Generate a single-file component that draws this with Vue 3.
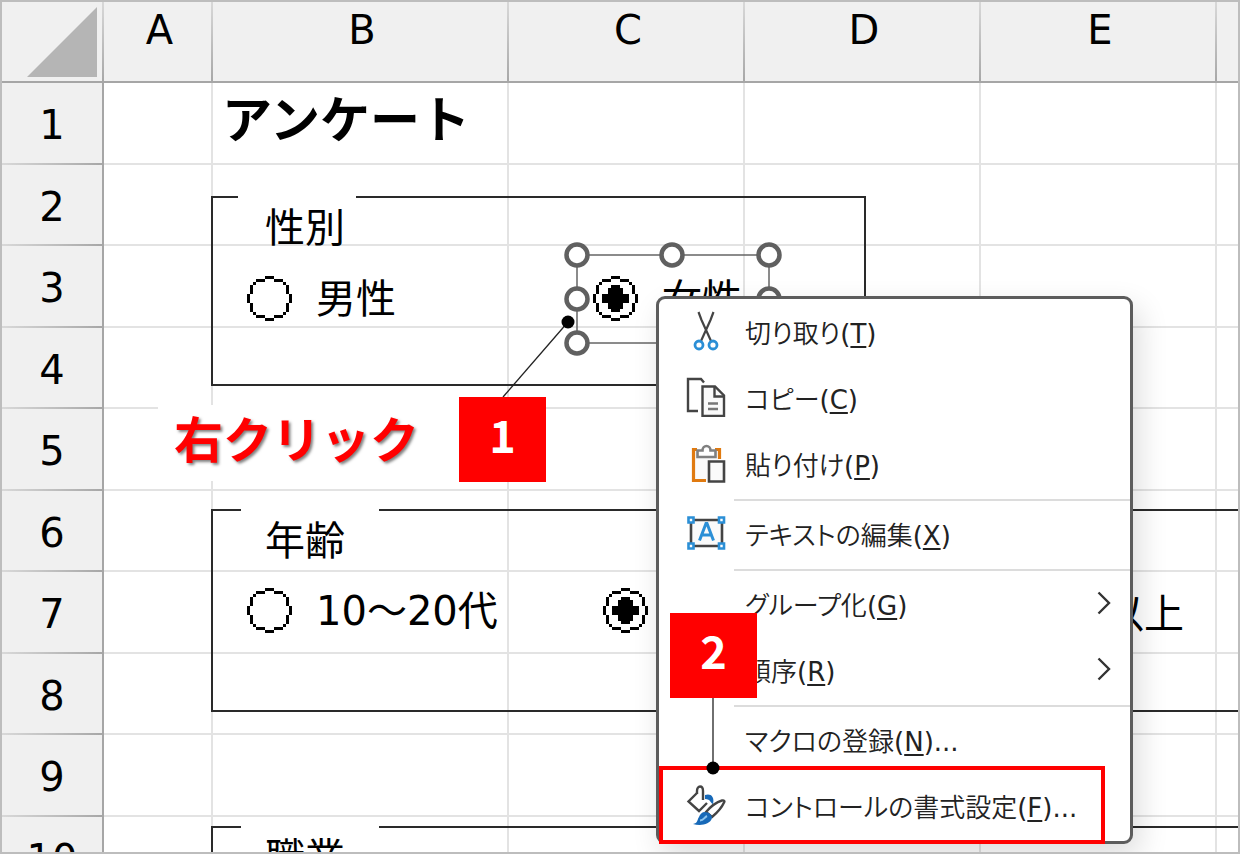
<script setup>
import { ref } from 'vue'

const columns = ['A', 'B', 'C', 'D', 'E', '']
const rows = [1, 2, 3, 4, 5, 6, 7, 8, 9, 10]

const gender = ref('female')
const age = ref('middle')

const menu = [
  { label: '切り取り', accel: 'T', icon: 'cut' },
  { label: 'コピー', accel: 'C', icon: 'copy' },
  { label: '貼り付け', accel: 'P', icon: 'paste' },
  { divider: true },
  { label: 'テキストの編集', accel: 'X', icon: 'text' },
  { divider: true },
  { label: 'グループ化', accel: 'G', submenu: true },
  { label: '順序', accel: 'R', submenu: true },
  { divider: true },
  { label: 'マクロの登録', accel: 'N', more: true },
  { label: 'コントロールの書式設定', accel: 'F', icon: 'format', more: true },
]

// 15x15 pixel ring and dot of the option button
const ring =
  'M6 0h3v1H6zM3 1h3v1H3zM9 1h3v1H9zM2 2h1v1H2zM12 2h1v1h-1zM1 3h1v3H1zM13 3h1v3h-1zM0 6h1v3H0zM14 6h1v3h-1z' +
  'M1 9h1v3H1zM13 9h1v3h-1zM2 12h1v1H2zM12 12h1v1h-1zM3 13h3v1H3zM9 13h3v1H9zM6 14h3v1H6z'
const dot = 'M6 3h3v1h1v2h2v3h-2v2H9v1H6v-1H5V9H3V6h2V4h1z'

const options = [
  { id: 'male', group: 'gender', value: 'male', text: '男性' },
  { id: 'female', group: 'gender', value: 'female', text: '女性' },
  { id: 'young', group: 'age', value: 'young', text: '10～20代' },
  { id: 'middle', group: 'age', value: 'middle', text: '' },
]

const models = { gender, age }
const handles = [[13, 13], [108, 13], [205, 13], [13, 57], [205, 57], [13, 101], [108, 101], [205, 101]]
</script>

<template>
  <main class="sheet">
    <table class="grid">
      <colgroup>
        <col class="col-head" />
        <col class="col-a" />
        <col class="col-b" />
        <col class="col-c" />
        <col class="col-d" />
        <col class="col-e" />
        <col />
      </colgroup>
      <thead>
        <tr>
          <th class="corner">
            <svg class="corner-mark" viewBox="0 0 70 70" aria-hidden="true">
              <path d="M70 0v70H0z" fill="#b5b5b5" />
            </svg>
          </th>
          <th v-for="c in columns" :key="c" scope="col">{{ c }}</th>
        </tr>
      </thead>
      <tbody>
        <tr v-for="r in rows" :key="r">
          <th scope="row">{{ r }}</th>
          <td v-for="c in columns" :key="c">
            <span v-if="r === 1 && c === 'B'" class="title">アンケート</span>
          </td>
        </tr>
      </tbody>
    </table>

    <!-- Form controls drawn on top of the cells -->
    <fieldset class="group group-gender">
      <legend><span>性別</span></legend>
    </fieldset>
    <fieldset class="group group-age">
      <legend><span>年齢</span></legend>
    </fieldset>
    <fieldset class="group group-job">
      <legend><span>職業</span></legend>
    </fieldset>

    <label v-for="o in options" :key="o.id" class="option" :class="`option-${o.id}`">
      <input
        v-model="models[o.group].value"
        type="radio"
        :name="o.group"
        :value="o.value"
      />
      <svg viewBox="0 0 15 15" shape-rendering="crispEdges" aria-hidden="true">
        <path :d="ring" />
        <path v-if="models[o.group].value === o.value" :d="dot" />
      </svg>
      <span>{{ o.text }}</span>
    </label>
    <span class="option-tail">以上</span>

    <svg class="selection" viewBox="0 0 218 114" aria-hidden="true">
      <rect x="13" y="13" width="192" height="88" fill="none" stroke="#666" stroke-width="1.5" />
      <circle
        v-for="([x, y], i) in handles"
        :key="i"
        :cx="x"
        :cy="y"
        r="10.5"
        fill="#fff"
        stroke="#606060"
        stroke-width="4.5"
      />
    </svg>

    <div class="context-menu" role="menu">
      <template v-for="(item, i) in menu" :key="i">
        <hr v-if="item.divider" />
        <button v-else type="button" role="menuitem" class="item">
          <span class="icon">
            <svg v-if="item.icon === 'cut'" viewBox="0 0 40 40">
              <path d="M12.500 1l3 8 9.500 21M27.500 1l-3 8-9.500 21" fill="none" stroke="#444" stroke-width="2.200" />
              <circle cx="13" cy="34" r="4" fill="#fff" stroke="#2b8fd6" stroke-width="2.800" />
              <circle cx="27" cy="34" r="4" fill="#fff" stroke="#2b8fd6" stroke-width="2.800" />
            </svg>
            <svg v-else-if="item.icon === 'copy'" viewBox="0 0 40 40" fill="none" stroke="#444" stroke-width="2.400">
              <path d="M12 34H2V2h13l3 3.500" />
              <path d="M16.500 9.500H29l9 9V39H16.500z" fill="#fafafa" />
              <path d="M28.500 10v9.500H38" />
              <path d="M22 26.500h10M22 32h10" stroke="#777" />
            </svg>
            <svg v-else-if="item.icon === 'paste'" viewBox="0 0 40 40" fill="none">
              <path d="M7 6h26v14H22v18H7z" fill="#fafafa" />
              <path d="M11 6.500H7.500v31H20M29 6.500h4.500V16" stroke="#e07a10" stroke-width="3.200" />
              <path d="M11.500 14V7.500h5c0-6 8-6 8 0h5V14z" fill="#fff" stroke="#808080" stroke-width="2.600" />
              <path d="M23 18.500h15v20H23z" fill="#fafafa" stroke="#444" stroke-width="2.600" />
            </svg>
            <svg v-else-if="item.icon === 'text'" viewBox="0 0 40 40" fill="none">
              <path d="M5 7h31v26H5z" fill="#fafafa" stroke="#444" stroke-width="2.600" />
              <path d="M13.500 27.500l6.500-17h1l6.500 17M16 22h9" stroke="#2b8fd6" stroke-width="3" />
              <path
                d="M2.500 4.500h5v5h-5zM33 4.500h5v5h-5zM2.500 30.500h5v5h-5zM33 30.500h5v5h-5z"
                fill="#fff"
                stroke="#2b8fd6"
                stroke-width="2.600"
              />
            </svg>
            <svg v-else-if="item.icon === 'format'" viewBox="0 0 40 40" fill="none">
              <path d="M11 8L2.500 16.500 13 26l8-8" stroke="#444" stroke-width="2.400" />
              <path d="M11 9V6c0-6 6-6 6 0v9" stroke="#444" stroke-width="2.400" />
              <path d="M19 10c5-2 10 1 8 9-3-1-2-5-8-5z" fill="#1769b8" />
              <path d="M20 27C26 20 31 17 36 15.500c2-.500 3 .500 2 2C36 22 32 27 26 32z" fill="#fff" stroke="#444" stroke-width="2.400" />
              <path d="M19 27c4 0 7 3 7 6-2 7-12 8-19 6 5-1 4-4 6-7 1-3 3-5 6-5z" fill="#1769b8" />
              <path d="M14 35.500c4 0 4-3 7-4.500" stroke="#8cc4ee" stroke-width="2" />
            </svg>
          </span>
          <span class="label">{{ item.label }}</span>
          <span class="accel">(<u>{{ item.accel }}</u>)<template v-if="item.more">...</template></span>
          <svg v-if="item.submenu" class="chevron" viewBox="0 0 14 24" aria-hidden="true">
            <path d="M1.500 1.500L12 12 1.500 22.500" fill="none" stroke="#333" stroke-width="2.400" />
          </svg>
        </button>
      </template>
    </div>

    <!-- Step annotations -->
    <strong class="note">右クリック</strong>
    <div class="frame"></div>
    <svg class="leader leader-1" viewBox="0 0 76 86" aria-hidden="true">
      <path d="M3 83L68 8" stroke="#222" stroke-width="1.300" />
      <circle cx="68" cy="8" r="6.500" />
    </svg>
    <b class="step step-1">1</b>
    <svg class="leader leader-2" viewBox="0 0 14 80" aria-hidden="true">
      <path d="M7 0v72" stroke="#222" stroke-width="1.300" />
      <circle cx="7" cy="72" r="6.500" />
    </svg>
    <b class="step step-2">2</b>
  </main>
</template>

<style>
body {
  margin: 0;
  background: #fff;
}
</style>

<style scoped>
.sheet {
  position: relative;
  box-sizing: border-box;
  height: 100vh;
  overflow: hidden;
  border: 2px solid #bdbdbd;
  background: #fff;
  color: #000;
  font-family: 'DejaVu Sans', 'Noto Sans CJK JP', sans-serif;
  font-size: 40px;
  line-height: 40px;
}

.grid {
  width: 100%;
  table-layout: fixed;
  border-collapse: separate;
  border-spacing: 0;
}

.col-head {
  width: 102px;
}

.col-a {
  width: 109px;
}

.col-b {
  width: 296px;
}

.col-c,
.col-d,
.col-e {
  width: 236px;
}

.grid th,
.grid td {
  box-sizing: border-box;
  height: 81px;
  padding: 0;
  border: 0 solid #e3e3e3;
  border-width: 0 2px 2px 0;
}

.grid tbody tr:nth-child(odd) > * {
  height: 82px;
}

.grid th {
  font-weight: 400;
  background: #f0f0f0;
  border-color: #a6a6a6;
}

.grid thead th {
  padding: 8px 0 0 4px;
  vertical-align: top;
  border-right-color: transparent;
  background:
    linear-gradient(#d8d8d8, #a6a6a6) right / 2px 100% no-repeat border-box,
    #f0f0f0;
}

.grid tbody th {
  padding-top: 4px;
  border-bottom-color: transparent;
  background:
    linear-gradient(90deg, #d8d8d8, #a6a6a6) bottom / 100% 2px no-repeat border-box,
    #f0f0f0;
}

.grid tr > :last-child {
  border-right: 0;
}

.grid thead th:last-child {
  background: #f0f0f0;
}

.grid thead .corner {
  padding: 5px 4px 4px 25px;
}

.corner-mark {
  display: block;
  width: 70px;
  height: 70px;
}

.title {
  display: block;
  padding: 0 0 4px 9px;
  font-size: 50px;
  font-weight: 700;
  line-height: 50px;
  white-space: nowrap;
}

.group {
  position: absolute;
  box-sizing: border-box;
  margin: 0;
  padding: 0;
  border: 2px solid #2a2a2a;
}

.group legend {
  width: 138px;
  height: 2px;
  margin-left: 28px;
  padding: 0;
}

.group legend span {
  display: block;
  padding: 12px 0 0 24px;
}

.group-gender {
  left: 209px;
  top: 194px;
  width: 655px;
  height: 190px;
}

.group-gender legend {
  width: 118px;
  margin-left: 25px;
}

.group-gender legend span {
  padding-left: 27px;
}

.group-age {
  left: 209px;
  right: -8px;
  top: 507px;
  height: 203px;
}

.group-job {
  left: 209px;
  right: -8px;
  top: 824px;
  height: 190px;
}

.option {
  position: absolute;
  display: flex;
  align-items: center;
  gap: 24px;
  white-space: nowrap;
}

.option input {
  position: absolute;
  width: 45px;
  height: 45px;
  margin: 0;
  opacity: 0;
}

.option svg {
  width: 45px;
  height: 45px;
}

.option-male {
  left: 245px;
  top: 274px;
}

.option-female {
  left: 591px;
  top: 274px;
}

.option-young {
  left: 245px;
  top: 586px;
}

.option-middle {
  left: 601px;
  top: 586px;
}

.option-tail {
  position: absolute;
  left: 1102px;
  top: 592px;
}

.selection {
  position: absolute;
  left: 562px;
  top: 240px;
  width: 218px;
  height: 114px;
}

.context-menu {
  position: absolute;
  left: 654px;
  top: 294px;
  box-sizing: border-box;
  width: 477px;
  padding: 1px 0;
  border: 3px solid #5c5c5c;
  border-radius: 9px;
  background: #fff;
  box-shadow: 6px 12px 30px rgba(0, 0, 0, 0.14);
}

.context-menu hr {
  height: 2px;
  margin: 1px 0 1px 75px;
  border: 0;
  background: #dcdcdc;
}

.item {
  display: flex;
  align-items: center;
  box-sizing: border-box;
  width: 100%;
  height: 66px;
  padding: 2px 19px 0 27px;
  border: 0;
  background: none;
  color: #222;
  font-family: inherit;
  font-size: 26px;
  line-height: 40px;
  text-align: left;
  white-space: nowrap;
}

.icon {
  width: 40px;
  height: 40px;
  margin: 0 19px 6px 0;
}

.icon svg {
  display: block;
}

.label {
  font-weight: 350;
  font-feature-settings: 'palt';
}

.accel u {
  text-decoration-thickness: 2px;
  text-underline-offset: 3px;
}

.chevron {
  width: 14px;
  height: 24px;
  margin: 0 0 6px auto;
}

.note {
  position: absolute;
  left: 156px;
  top: 403px;
  padding: 12px 41px 14px 16px;
  background: #fff;
  color: #f00;
  font-size: 49px;
  line-height: 50px;
  text-shadow: 2px 2px 3px rgba(0, 0, 0, 0.5);
}

.frame {
  position: absolute;
  left: 657px;
  top: 764px;
  box-sizing: border-box;
  width: 446px;
  height: 78px;
  border: 4px solid #f00;
}

.leader {
  position: absolute;
}

.leader-1 {
  left: 498px;
  top: 312px;
  width: 76px;
  height: 86px;
}

.leader-2 {
  left: 704px;
  top: 694px;
  width: 14px;
  height: 80px;
}

.step {
  position: absolute;
  box-sizing: border-box;
  width: 87px;
  height: 85px;
  padding-top: 14px;
  background: #f00;
  color: #fff;
  font-family: 'Noto Sans CJK JP', sans-serif;
  font-size: 45px;
  line-height: 45px;
  text-align: center;
}

.step-1 {
  left: 457px;
  top: 395px;
}

.step-2 {
  left: 668px;
  top: 611px;
}
</style>
